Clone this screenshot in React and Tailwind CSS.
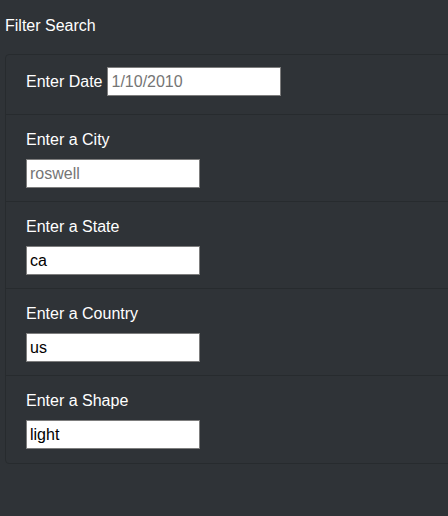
import React from "react";

const fields = [
  { label: "Enter a City", placeholder: "roswell", value: "" },
  { label: "Enter a State", placeholder: "", value: "ca" },
  { label: "Enter a Country", placeholder: "", value: "us" },
  { label: "Enter a Shape", placeholder: "", value: "light" },
];

const inputCls =
  "w-[174px] h-[29px] bg-white border border-[#7d7d7d] px-[3px] text-[16px] text-black placeholder:text-[#757575] outline-none";

const App = () => {
  return (
    <div
      className="min-h-[516px] w-[448px] overflow-hidden bg-[#2f3337] text-white"
      style={{ fontFamily: '"Liberation Sans", Arial, sans-serif' }}
    >
      <h2 className="pt-[14px] pl-[5px] text-[16px] leading-6 h-[54px]">Filter Search</h2>
      <ul className="ml-[5px] w-[470px] border border-[#272b2e] rounded-[4px]">
        <li className="flex items-start px-5 pt-3 h-[60px] border-b border-[#272b2e]">
          <label className="text-[16px] leading-[29px] mr-[5px]">Enter Date</label>
          <input className={inputCls} placeholder="1/10/2010" defaultValue="" />
        </li>
        {fields.map((f, i) => (
          <li
            key={f.label}
            className={`px-5 pt-3 h-[87px] ${i < fields.length - 1 ? "border-b border-[#272b2e]" : ""}`}
          >
            <label className="block text-[16px] leading-[26px] mb-[6px]">{f.label}</label>
            <input className={inputCls} placeholder={f.placeholder} defaultValue={f.value} />
          </li>
        ))}
      </ul>
    </div>
  );
};

export default App;
